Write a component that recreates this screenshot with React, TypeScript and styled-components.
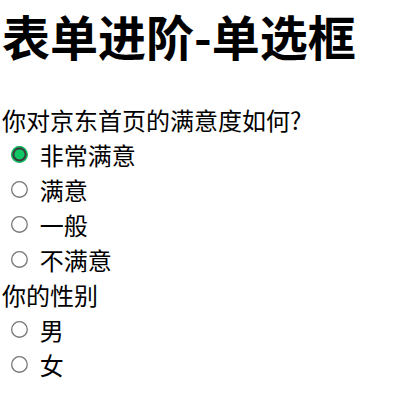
import styled, { createGlobalStyle } from "styled-components";

const GlobalStyle = createGlobalStyle`
  body {
    margin: 0;
    background: #fff;
    color: #000;
    font-family: "Noto Sans CJK SC", "Noto Sans", sans-serif;
  }
`;

const Page = styled.div`
  padding: 0 2px;
`;

const Title = styled.h1`
  margin: 0 0 32px;
  font-size: 48px;
  font-weight: 700;
  line-height: 70px;
`;

const Question = styled.div`
  font-size: 24px;
  line-height: 35px;
`;

const Option = styled.label`
  display: flex;
  align-items: center;
  height: 35px;
  font-size: 24px;
`;

// zoomed so the ring gets the heavier stroke of the reference
const Radio = styled.input.attrs({ type: "radio" })`
  width: 13px;
  height: 13px;
  margin: 0 9px 0 7px;
  zoom: 1.3;
  accent-color: #10c766;
`;

const survey = ["非常满意", "满意", "一般", "不满意"];
const genders = ["男", "女"];

const App = () => {
  return (
    <Page>
      <GlobalStyle />
      <Title>表单进阶-单选框</Title>
      <form>
        <Question>你对京东首页的满意度如何?</Question>
        {survey.map((s, i) => (
          <Option key={s}>
            <Radio name="jd" defaultChecked={i === 0} />
            {s}
          </Option>
        ))}
        <Question>你的性别</Question>
        {genders.map((g) => (
          <Option key={g}>
            <Radio name="sex" />
            {g}
          </Option>
        ))}
      </form>
    </Page>
  );
};

export default App;
